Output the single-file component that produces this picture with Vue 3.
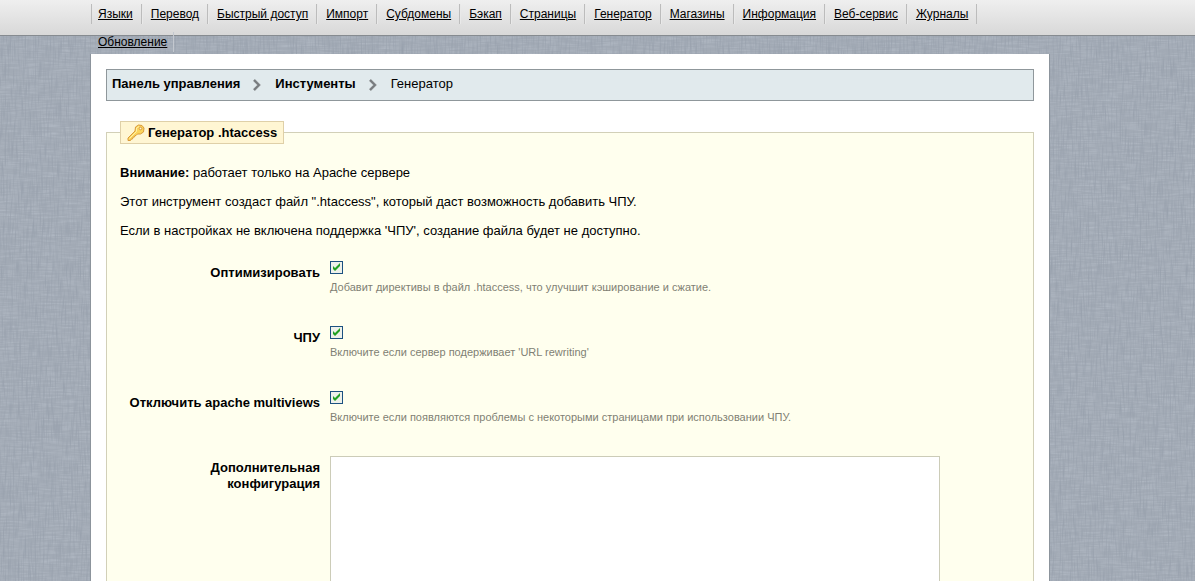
<template>
  <div class="page">
    <svg class="texture" aria-hidden="true">
      <filter id="weave-x" x="0" y="0" width="100%" height="100%" color-interpolation-filters="sRGB">
        <feTurbulence type="fractalNoise" baseFrequency="0.05 0.6" numOctaves="2" seed="4" />
        <feColorMatrix values="0 0 0 0 0.8  0 0 0 0 0.83  0 0 0 0 0.87  2 0 0 0 -0.75" />
      </filter>
      <filter id="weave-y" x="0" y="0" width="100%" height="100%" color-interpolation-filters="sRGB">
        <feTurbulence type="fractalNoise" baseFrequency="0.6 0.05" numOctaves="2" seed="9" />
        <feColorMatrix values="0 0 0 0 0.5  0 0 0 0 0.54  0 0 0 0 0.6  2 0 0 0 -0.85" />
      </filter>
      <rect width="100%" height="100%" filter="url(#weave-x)" />
      <rect width="100%" height="100%" filter="url(#weave-y)" />
    </svg>

    <header class="topbar">
      <nav>
        <ul class="menu">
          <li v-for="item in menu" :key="item"><a href="#">{{ item }}</a></li>
        </ul>
      </nav>
    </header>

    <main class="content">
      <nav class="path-bar">
        <template v-for="step in path" :key="step">
          <a href="#">{{ step }}</a>
          <svg class="chevron" width="10" height="12" viewBox="0 0 10 12" aria-hidden="true">
            <path d="M2 1 L7 6 L2 11" fill="none" stroke="#bfc5c7" stroke-width="3" />
            <path d="M2 1 L7 6 L2 11" fill="none" stroke="#777b7e" stroke-width="2" />
          </svg>
        </template>
        <span>Генератор</span>
      </nav>

      <form class="generator" @submit.prevent>
        <h2 class="legend">
          <svg width="18" height="18" viewBox="0 0 18 18" aria-hidden="true">
            <path
              d="M8.5 3 L11.5 1 L15 1.5 L17 4 L16.5 8 L13.5 10 L10.5 10 L9 11.5 L8 11.5 L7.5 13 L6 13.2 L5.5 15 L4 15.2 L3.5 16.5 L1 16.5 L1 14 L8 7 Z"
              fill="#fbd45c"
              stroke="#d99a3b"
              stroke-linejoin="round"
            />
            <path d="M2.5 14.5 L9.5 7.5 L9.5 4 L12 2.5" fill="none" stroke="#fff0a8" />
            <circle cx="13.5" cy="4.5" r="1.3" fill="#fff6dc" stroke="#d99a3b" />
          </svg>
          <span>Генератор .htaccess</span>
        </h2>

        <p><b>Внимание:</b> работает только на Apache сервере</p>
        <p>Этот инструмент создаст файл ".htaccess", который даст возможность добавить ЧПУ.</p>
        <p>Если в настройках не включена поддержка 'ЧПУ', создание файла будет не доступно.</p>

        <div class="fields">
          <div v-for="option in options" :key="option.id" class="row">
            <label :for="option.id">{{ option.label }}</label>
            <div class="field">
              <input :id="option.id" v-model="option.checked" type="checkbox" />
              <small>{{ option.hint }}</small>
            </div>
          </div>
          <div class="row">
            <label for="specific">Дополнительная конфигурация</label>
            <textarea id="specific" v-model="specific"></textarea>
          </div>
        </div>
      </form>
    </main>
  </div>
</template>

<script setup>
import { reactive, ref } from 'vue'

const menu = [
  'Языки', 'Перевод', 'Быстрый доступ', 'Импорт', 'Субдомены', 'Бэкап', 'Страницы',
  'Генератор', 'Магазины', 'Информация', 'Веб-сервис', 'Журналы', 'Обновление'
]

const path = ['Панель управления', 'Инстументы']

const options = reactive([
  {
    id: 'optimize',
    label: 'Оптимизировать',
    hint: 'Добавит директивы в файл .htaccess, что улучшит кэширование и сжатие.',
    checked: true
  },
  {
    id: 'friendly-url',
    label: 'ЧПУ',
    hint: "Включите если сервер подерживает 'URL rewriting'",
    checked: true
  },
  {
    id: 'multiviews',
    label: 'Отключить apache multiviews',
    hint: 'Включите если появляются проблемы с некоторыми страницами при использовании ЧПУ.',
    checked: true
  }
])

const specific = ref('')
</script>

<style>
body {
  margin: 0;
}
</style>

<style scoped>
.page {
  position: relative;
  height: 100vh;
  overflow: hidden;
  background: #a2aab5;
  color: #000;
  font-family: Arial, "Liberation Sans", sans-serif;
  font-size: 13px;
  line-height: 16px;
}

/* woven backdrop */
.texture {
  position: absolute;
  inset: 0;
  width: 100%;
  height: 100%;
  opacity: 0.3;
}

/* top menu, extra items wrap below the bar */
.topbar {
  position: relative;
  box-sizing: border-box;
  height: 36px;
  padding: 0 146px 0 91px;
  border-bottom: 1px solid #868b90;
  background: linear-gradient(#efefef, #d8d8d8);
}
.menu {
  display: flex;
  flex-wrap: wrap;
  row-gap: 8px;
  margin: 0;
  padding: 4px 0 0;
  list-style: none;
  font-size: 12px;
  line-height: 20px;
}
.menu li {
  padding: 0 8px;
  border-right: 1px solid #bcbcbc;
  border-left: 1px solid #e9e9e9;
}
.menu li:first-child {
  padding-left: 6px;
  border-left-color: #bcbcbc;
}
.menu li:last-child {
  padding: 0 6px;
  border-color: transparent #c3c8cf transparent transparent;
}
.menu a {
  color: #000;
}

.content {
  position: relative;
  margin: 18px 145px 0 90px;
  padding: 15px;
  border-right: 1px solid #8c949c;
  border-left: 1px solid #8c949c;
  background: #fff;
}

.path-bar {
  display: flex;
  align-items: center;
  box-sizing: border-box;
  height: 32px;
  padding: 0 5px 2px;
  border: 1px solid #8f979b;
  background: #e1eaed;
}
.path-bar a {
  color: #000;
  font-weight: bold;
  text-decoration: none;
}
.chevron {
  margin: 2px 13px 0 12px;
}

.generator {
  margin-top: 31px;
  padding: 0 13px 40px;
  border: 1px solid #d2d0b8;
  background: #ffffee;
}
.legend {
  display: flex;
  align-items: center;
  gap: 3px;
  box-sizing: border-box;
  width: fit-content;
  height: 23px;
  margin: -12px 0 21px;
  padding: 0 6px;
  border: 1px solid #dfd0a8;
  background: #fff6d3;
  font-size: 13px;
}
.generator p {
  margin: 0 0 13px;
}

.fields {
  padding-top: 9px;
}
.row {
  display: flex;
  gap: 10px;
  min-height: 65px;
}
.row label {
  flex: 0 0 200px;
  padding-top: 4px;
  font-weight: bold;
  text-align: right;
}
.field small {
  display: block;
  margin-top: 5px;
  color: #7f7f74;
  font-size: 11px;
}
.field input {
  display: block;
  box-sizing: border-box;
  width: 13px;
  height: 13px;
  margin: 0;
  border: 1px solid #1c5180;
  appearance: none;
  background: #eef1ea;
}
.field input:checked::before {
  content: "";
  display: block;
  width: 11px;
  height: 11px;
  background: #21a121;
  clip-path: polygon(2px 4px, 4px 6px, 9px 1px, 9px 4px, 4px 9px, 2px 7px);
}
textarea {
  flex: 0 1 610px;
  box-sizing: border-box;
  height: 300px;
  border: 1px solid #ccccb8;
  background: #fff;
  resize: none;
}
</style>
